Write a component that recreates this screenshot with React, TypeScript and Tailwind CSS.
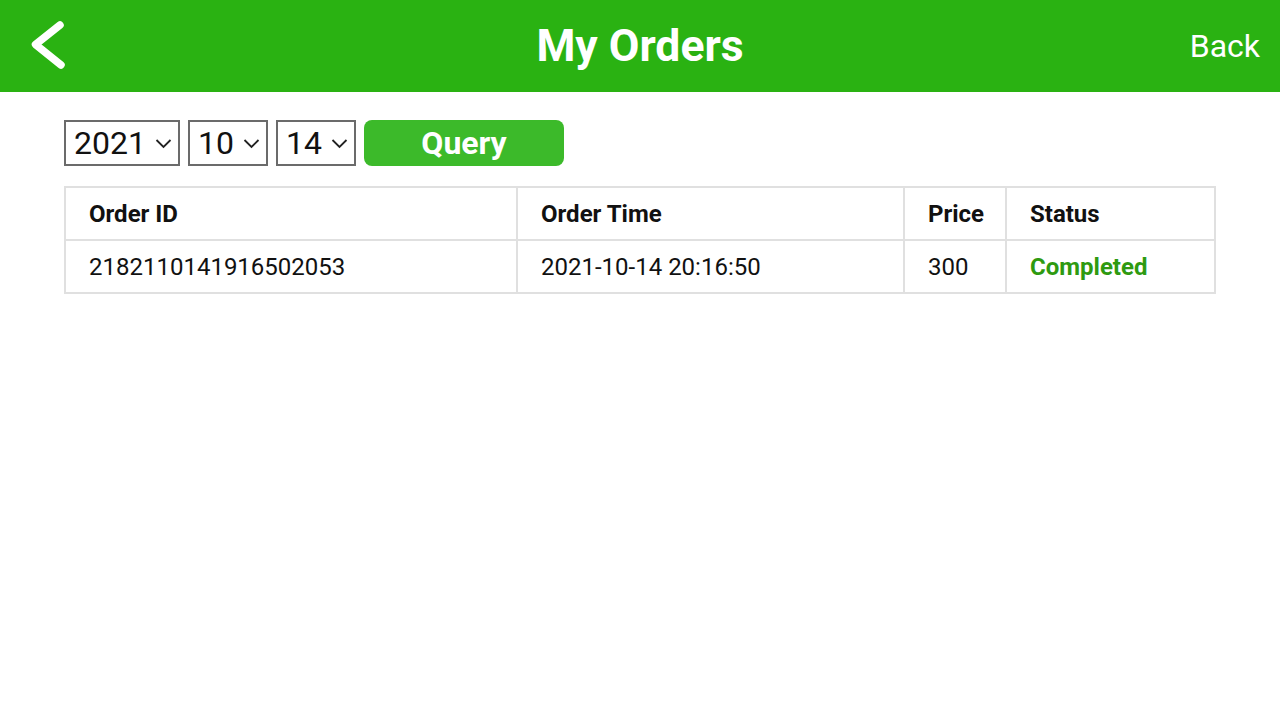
import React from 'react';

interface Order {
  id: string;
  time: string;
  price: string;
  status: string;
}

const orders: Order[] = [
  { id: '2182110141916502053', time: '2021-10-14 20:16:50', price: '300', status: 'Completed' },
];

const Chevron = () => (
  <svg width="17" height="11" viewBox="0 0 17 11" fill="none" className="shrink-0">
    <path d="M1.5 2 L8.5 9 L15.5 2" stroke="#222" strokeWidth="1.8" />
  </svg>
);

const DateSelect: React.FC<{ value: string; width: string }> = ({ value, width }) => (
  <div className={`flex items-center justify-between h-[46px] border-2 border-[#6b6b6b] pl-[8px] pr-[6px] ${width}`}>
    <span className="text-[32px] leading-none text-[#111]">{value}</span>
    <Chevron />
  </div>
);

const App: React.FC = () => {
  return (
    <div className="w-[1280px] h-[720px] bg-white font-['Roboto',sans-serif]">
      {/* Header */}
      <div className="h-[92px] bg-[#2ab212] grid grid-cols-[1fr_auto_1fr] items-center px-[22px]">
        <button className="ml-[6px] w-[44px] h-[56px] flex items-center">
          <svg width="44" height="56" viewBox="0 0 44 56" fill="none">
            <path d="M32 7 L7.5 26.5 L33 47" stroke="white" strokeWidth="7.5" strokeLinecap="round" strokeLinejoin="round" />
          </svg>
        </button>
        <h1 className="text-[44.5px] font-bold text-white leading-none">My Orders</h1>
        <span className="text-[32px] text-white leading-none justify-self-end mr-[-2px]">Back</span>
      </div>

      <div className="px-[64px]">
        {/* Filters */}
        <div className="flex items-center gap-[8px] mt-[28px]">
          <DateSelect value="2021" width="w-[116px]" />
          <DateSelect value="10" width="w-[80px]" />
          <DateSelect value="14" width="w-[80px]" />
          <button className="w-[200px] h-[46px] rounded-[8px] bg-[#3cba2a] text-white text-[32px] font-bold leading-none">
            Query
          </button>
        </div>

        {/* Table */}
        <table className="mt-[20px] w-[1150px] border-collapse table-fixed text-[24px] text-[#111]">
          <colgroup>
            <col className="w-[452px]" />
            <col className="w-[387px]" />
            <col className="w-[102px]" />
            <col className="w-[209px]" />
          </colgroup>
          <thead>
            <tr className="h-[53px]">
              {['Order ID', 'Order Time', 'Price', 'Status'].map((h) => (
                <th key={h} className="border-2 border-[#e0e0e0] text-left font-bold pl-[23px] pt-[1px]">
                  {h}
                </th>
              ))}
            </tr>
          </thead>
          <tbody>
            {orders.map((o) => (
              <tr key={o.id} className="h-[53px]">
                <td className="border-2 border-[#e0e0e0] pl-[23px] pt-[1px]">{o.id}</td>
                <td className="border-2 border-[#e0e0e0] pl-[23px] pt-[1px]">{o.time}</td>
                <td className="border-2 border-[#e0e0e0] pl-[23px] pt-[1px]">{o.price}</td>
                <td className="border-2 border-[#e0e0e0] pl-[23px] pt-[1px] font-bold text-[#2e9a10]">{o.status}</td>
              </tr>
            ))}
          </tbody>
        </table>
      </div>
    </div>
  );
};

export default App;
